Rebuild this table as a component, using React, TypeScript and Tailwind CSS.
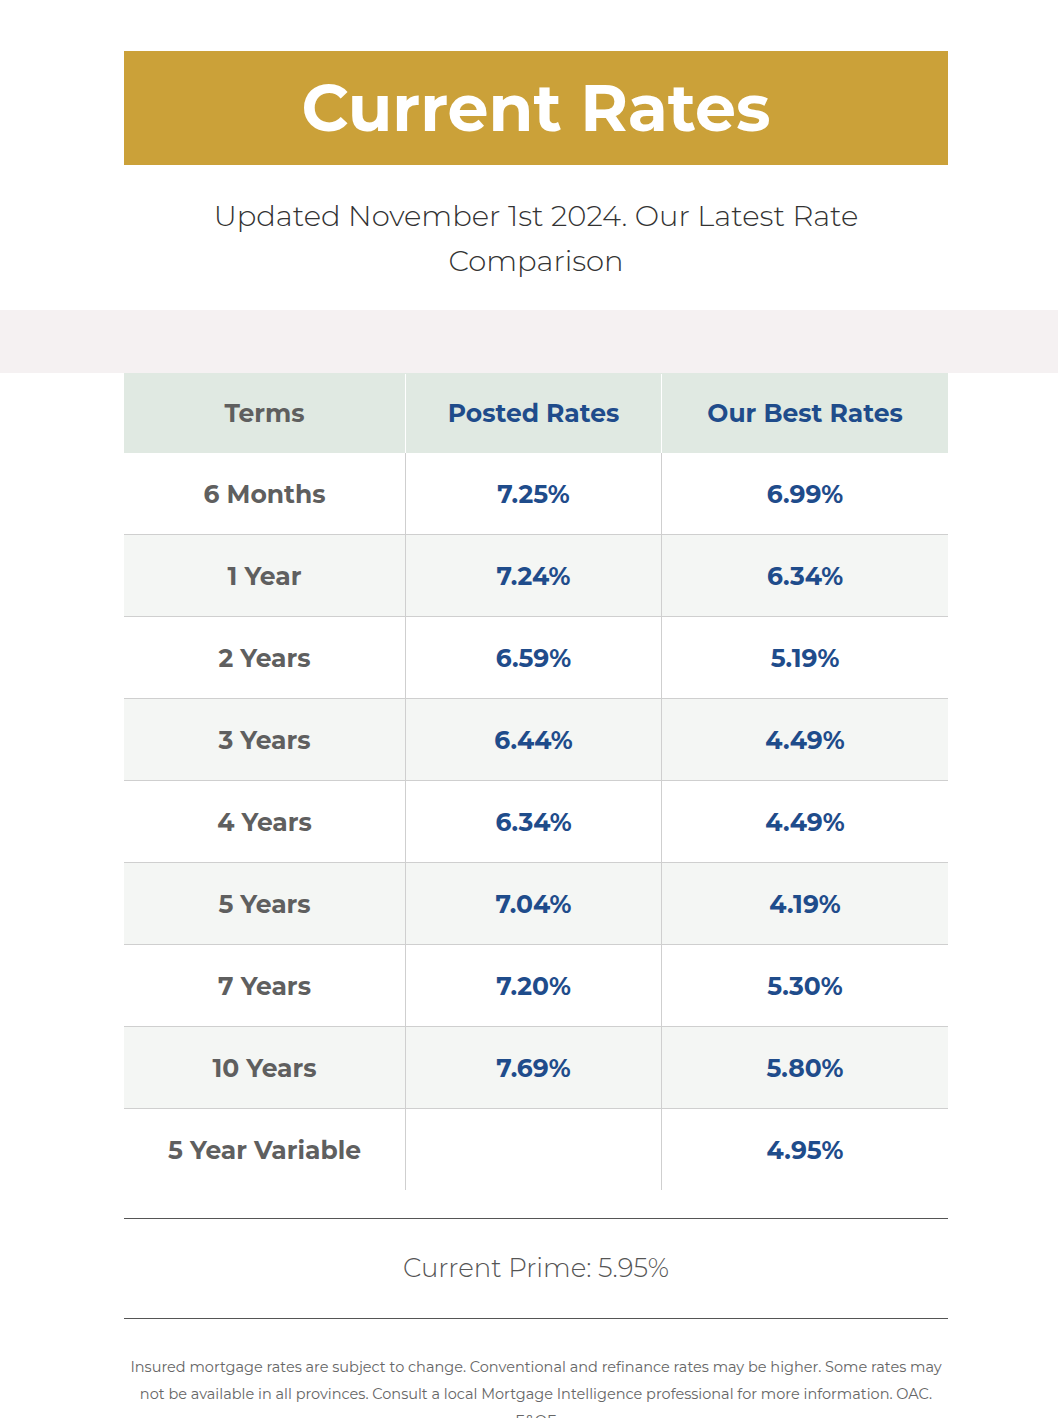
const rows = [
  { term: '6 Months', posted: '7.25%', best: '6.99%' },
  { term: '1 Year', posted: '7.24%', best: '6.34%' },
  { term: '2 Years', posted: '6.59%', best: '5.19%' },
  { term: '3 Years', posted: '6.44%', best: '4.49%' },
  { term: '4 Years', posted: '6.34%', best: '4.49%' },
  { term: '5 Years', posted: '7.04%', best: '4.19%' },
  { term: '7 Years', posted: '7.20%', best: '5.30%' },
  { term: '10 Years', posted: '7.69%', best: '5.80%' },
  { term: '5 Year Variable', posted: '', best: '4.95%' },
]

const font = "font-['Montserrat','DejaVu_Sans','Inter',sans-serif]"

export default function App() {
  return (
    <div className={`w-full bg-white ${font}`}>
      <div className="ml-[124px] w-[824px] pt-[51px]">
        <div className="flex h-[114px] items-center justify-center bg-[#cba139]">
          <h1 className="text-[65px] font-bold text-white">Current Rates</h1>
        </div>
        <p className="mx-auto mt-[28px] w-[720px] text-center text-[29px] font-light leading-[45px] text-[#333]">
          Updated November 1st 2024. Our Latest Rate Comparison
        </p>
      </div>

      <div className="mt-[27px] h-[63px] bg-[#f5f1f2]" />

      <div className="ml-[124px] w-[824px]">
        <div className="grid h-[80px] grid-cols-[282px_256px_286px] bg-[#e0e9e2] pt-[1px] text-[25px] font-bold">
          <div className="flex items-center justify-center border-r border-white text-[#5f5f5f]">Terms</div>
          <div className="flex items-center justify-center border-r border-white text-[#1f4c8b]">Posted Rates</div>
          <div className="flex items-center justify-center text-[#1f4c8b]">Our Best Rates</div>
        </div>
        {rows.map((r, i) => (
          <div
            key={r.term}
            className={`grid grid-cols-[282px_256px_286px] text-[25px] font-bold ${
              i % 2 === 1 ? 'bg-[#f4f6f4]' : 'bg-white'
            } ${i < rows.length - 1 ? 'h-[82px] border-b border-[#cfcfcf]' : 'h-[81px]'}`}
          >
            <div className="flex items-center justify-center border-r border-[#cfcfcf] pt-[3px] text-[#5f5f5f]">{r.term}</div>
            <div className="flex items-center justify-center border-r border-[#cfcfcf] pt-[3px] text-[#1f4c8b]">{r.posted}</div>
            <div className="flex items-center justify-center pt-[3px] text-[#1f4c8b]">{r.best}</div>
          </div>
        ))}

        <div className="mt-[28px] flex h-[101px] items-center justify-center border-y border-[#555] text-[26px] font-light text-[#555]">
          Current Prime: 5.95%
        </div>

        <p className="mt-[35px] text-center text-[14.5px] font-normal leading-[27px] text-[#666]">
          Insured mortgage rates are subject to change. Conventional and refinance rates may be higher. Some rates may
          <br />
          not be available in all provinces. Consult a local Mortgage Intelligence professional for more information. OAC.
          <br />
          E&amp;OE
        </p>
      </div>
    </div>
  )
}
